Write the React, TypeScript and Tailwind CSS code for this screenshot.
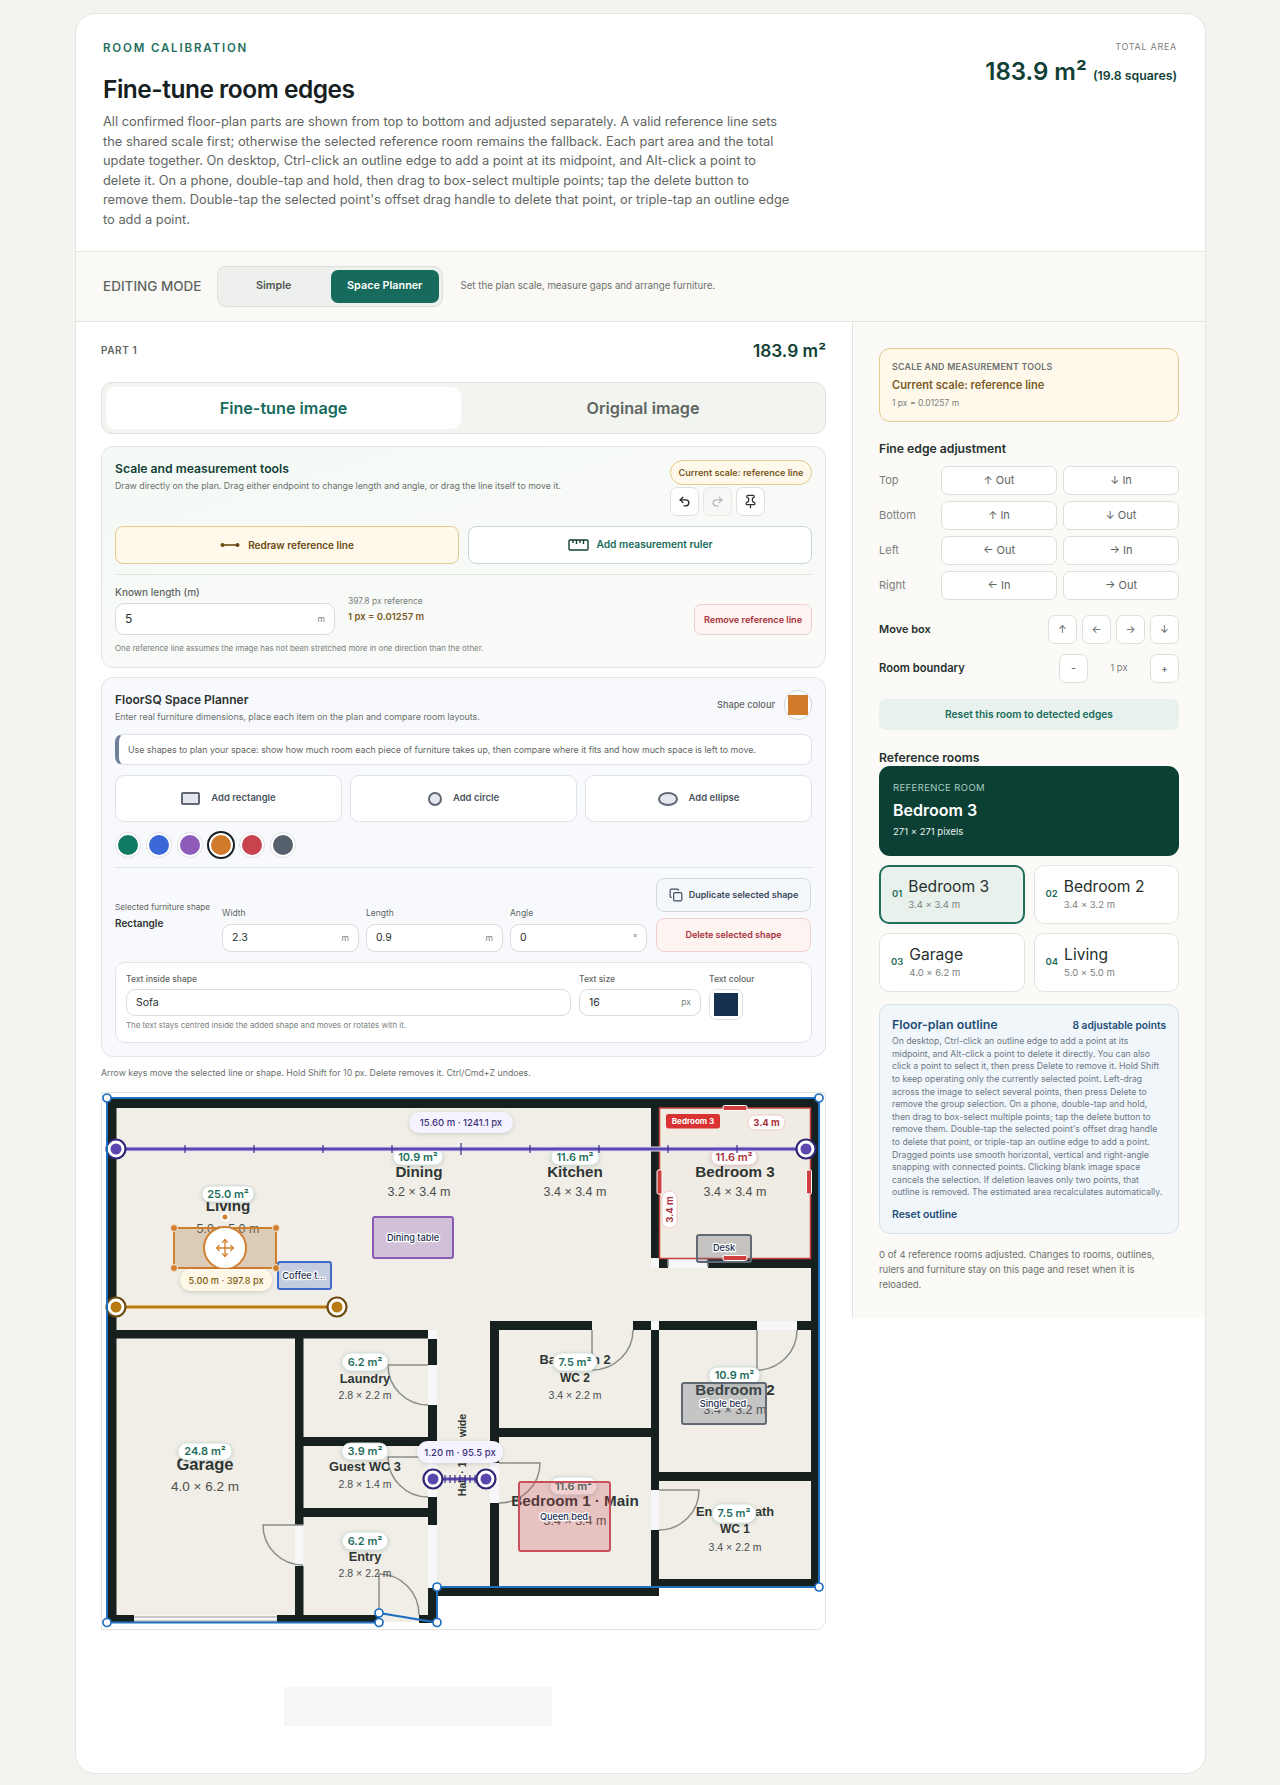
import { Copy, Move, Pin, Redo2, Undo2 } from 'lucide-react'

const walls = [
  [107, 1099, 712, 9],
  [107, 1099, 9.5, 524],
  [811, 1099, 8, 488],
  [116, 1330, 312, 8.5],
  [428, 1339, 9, 26],
  [428, 1405, 9, 41],
  [303, 1437, 125, 9],
  [428, 1497, 9, 28],
  [428, 1588, 9, 35],
  [295, 1338, 8.5, 187],
  [295, 1566, 8.5, 50],
  [303, 1508, 125, 9],
  [107, 1615, 27, 8],
  [277, 1615, 102, 8],
  [419, 1615, 18, 8],
  [438, 1587, 221, 9],
  [651, 1579, 168, 8],
  [490, 1321, 9, 142],
  [490, 1503, 9, 84],
  [490, 1321, 102, 9],
  [633, 1321, 18, 9],
  [659, 1321, 98, 9],
  [797, 1321, 14, 9],
  [651, 1330, 8, 160],
  [651, 1530, 8, 57],
  [490, 1428, 161, 9],
  [659, 1472, 152, 9],
  [651, 1108, 8, 150],
  [659, 1259, 9, 9],
  [708, 1259, 103, 9],
]

const gaps = [
  [428, 1330, 9, 9],
  [428, 1365, 9, 40],
  [428, 1446, 9, 51],
  [428, 1525, 9, 63],
  [295, 1525, 8.5, 41],
  [490, 1463, 9, 40],
  [651, 1321, 8, 9],
  [757, 1321, 40, 9],
  [651, 1490, 8, 40],
  [651, 1259, 8, 9],
  [668, 1259, 40, 9],
]

const doors = [
  'M428 1365H388A40 40 0 0 0 428 1405',
  'M428 1457H388A40 40 0 0 0 428 1497',
  'M303 1525H263A40 40 0 0 0 303 1565',
  'M379 1615V1574A40 41 0 0 1 419 1615',
  'M592 1330V1370A41 40 0 0 0 633 1330',
  'M757 1330V1370A40 40 0 0 0 797 1330',
  'M668 1267V1227A40 40 0 0 1 708 1267',
  'M499 1463H540A41 40 0 0 1 499 1503',
  'M659 1490H699A40 40 0 0 1 659 1530',
]

const introLines = [
  'All confirmed floor-plan parts are shown from top to bottom and adjusted separately. A valid reference line sets',
  'the shared scale first; otherwise the selected reference room remains the fallback. Each part area and the total',
  'update together. On desktop, Ctrl-click an outline edge to add a point at its midpoint, and Alt-click a point to',
  'delete it. On a phone, double-tap and hold, then drag to box-select multiple points; tap the delete button to',
  "remove them. Double-tap the selected point's offset drag handle to delete that point, or triple-tap an outline edge",
  'to add a point.',
]

const outlineLines = [
  'On desktop, Ctrl-click an outline edge to add a point at its',
  'midpoint, and Alt-click a point to delete it directly. You can also',
  'click a point to select it, then press Delete to remove it. Hold Shift',
  'to keep operating only the currently selected point. Left-drag',
  'across the image to select several points, then press Delete to',
  'remove the group selection. On a phone, double-tap and hold,',
  'then drag to box-select multiple points; tap the delete button to',
  "remove them. Double-tap the selected point's offset drag handle",
  'to delete that point, or triple-tap an outline edge to add a point.',
  'Dragged points use smooth horizontal, vertical and right-angle',
  'snapping with connected points. Clicking blank image space',
  'cancels the selection. If deletion leaves only two points, that',
  'outline is removed. The estimated area recalculates automatically.',
]

const planText = "font-['Liberation_Sans',Arial,sans-serif]"

function Room(props: { x: number; y: number; name: string; size?: number; sub?: string; subY?: number; dims: string; dimsY: number; dimSize?: number }) {
  const size = props.size ?? 15.2
  return (
    <g className={planText} textAnchor="middle">
      <text x={props.x} y={props.y} fontSize={size} fontWeight="700" fill="#2f3634">{props.name}</text>
      {props.sub && <text x={props.x} y={props.subY} fontSize={12} fontWeight="700" fill="#2f3634">{props.sub}</text>}
      <text x={props.x} y={props.dimsY} fontSize={props.dimSize ?? 12.5} fill="#4b4f4d">{props.dims}</text>
    </g>
  )
}

function AreaPill(props: { x1: number; x2: number; y1: number; y2: number; text: string; red?: boolean }) {
  const w = props.x2 - props.x1
  const h = props.y2 - props.y1
  return (
    <g>
      <rect x={props.x1} y={props.y1} width={w} height={h} rx={h / 2} fill="#fff" stroke={props.red ? '#efc9c9' : '#cfe2da'} strokeWidth="1" className="drop-shadow-sm" />
      <text x={props.x1 + w / 2} y={props.y1 + h / 2 + 3.8} textAnchor="middle" fontSize="11" fontWeight="600" fill={props.red ? '#a9323c' : '#1f6e5c'}>{props.text}</text>
    </g>
  )
}

function EndPoint(props: { x: number; y: number; ring: string; fill: string }) {
  return (
    <g>
      <circle cx={props.x} cy={props.y} r="9.5" fill="#fff" stroke={props.ring} strokeWidth="2.2" />
      <circle cx={props.x} cy={props.y} r="5.5" fill={props.fill} />
    </g>
  )
}

function ShapeLabel(props: { x: number; y: number; text: string; size?: number }) {
  return (
    <text x={props.x} y={props.y} textAnchor="middle" fontSize={props.size ?? 9.2} fontWeight="500" fill="#1e2f52" stroke="#fff" strokeWidth="2.5" strokeLinejoin="round" className="[paint-order:stroke]">
      {props.text}
    </text>
  )
}

function EdgeHandle(props: { x: number; y: number; w: number; h: number }) {
  return <rect x={props.x - props.w / 2} y={props.y - props.h / 2} width={props.w} height={props.h} rx="1.5" fill="#cf3f3f" stroke="#fff" strokeWidth="1" />
}

function FloorPlan() {
  const ticks = [185, 254, 323, 392, 461, 530, 599, 668, 737]
  const outline = [[107, 1098], [819, 1098], [819, 1587], [437, 1587], [437, 1622.5], [379, 1613], [379, 1622.5], [107, 1622.5]]
  return (
    <div className="h-[538px] w-[725px] overflow-hidden rounded-br-[10px] border border-[#e1e4de] bg-white">
      <svg viewBox="102 1092 724 538" width="724" height="538" className="-mt-[1px] block font-['Inter',sans-serif]">
        <path d="M107 1099H819V1587H659V1596H437V1622H107Z" fill="#f0eee7" />
        {walls.map(w => <rect key={w.join()} x={w[0]} y={w[1]} width={w[2]} height={w[3]} fill="#16211f" />)}
        {gaps.map(g => <rect key={g.join()} x={g[0]} y={g[1]} width={g[2]} height={g[3]} fill="#f7f7f9" />)}
        <rect x="134" y="1615" width="143" height="8" fill="#f7f7f9" />
        <path d="M134 1617H277M134 1621H277" stroke="#999" strokeWidth="1.2" />
        {doors.map(d => <path key={d} d={d} fill="none" stroke="#8b8f8b" strokeWidth="1.5" />)}

        <rect x="659.5" y="1108" width="151" height="150.5" fill="#f0ebe3" stroke="#c4403f" strokeWidth="1.5" />

        <Room x={419} y={1177} name="Dining" dims="3.2 × 3.4 m" dimsY={1196} />
        <Room x={575} y={1177} name="Kitchen" dims="3.4 × 3.4 m" dimsY={1196} />
        <Room x={735} y={1177} name="Bedroom 3" dims="3.4 × 3.4 m" dimsY={1196} />
        <Room x={228} y={1211} name="Living" dims="5.0 × 5.0 m" dimsY={1233} />
        <Room x={205} y={1470} name="Garage" size={16.6} dims="4.0 × 6.2 m" dimsY={1491} dimSize={13.5} />
        <Room x={365} y={1383} name="Laundry" size={12.8} dims="2.8 × 2.2 m" dimsY={1399} dimSize={10.5} />
        <Room x={365} y={1471} name="Guest WC 3" size={12.8} dims="2.8 × 1.4 m" dimsY={1488} dimSize={10.5} />
        <Room x={365} y={1561} name="Entry" size={12.8} dims="2.8 × 2.2 m" dimsY={1577} dimSize={10.5} />
        <Room x={575} y={1364} name="Bathroom 2" size={12.8} sub="WC 2" subY={1382} dims="3.4 × 2.2 m" dimsY={1399} dimSize={10.5} />
        <Room x={735} y={1395} name="Bedroom 2" dims="3.4 × 3.2 m" dimsY={1414} />
        <Room x={575} y={1506} name="Bedroom 1 · Main" dims="3.4 × 3.4 m" dimsY={1525} />
        <Room x={735} y={1516} name="Ensuite Bath" size={12.8} sub="WC 1" subY={1533} dims="3.4 × 2.2 m" dimsY={1551} dimSize={10.5} />
        <text x="466" y="1455" transform="rotate(-90 466 1455)" textAnchor="middle" fontSize="10.6" fontWeight="700" fill="#2f3634" className={planText}>Hall · 1.2 m wide</text>

        <AreaPill x1={393} x2={443} y1={1149} y2={1165} text="10.9 m²" />
        <AreaPill x1={551} x2={599} y1={1149} y2={1165} text="11.6 m²" />
        <AreaPill x1={711} x2={757} y1={1149} y2={1165} text="11.6 m²" red />
        <AreaPill x1={202} x2={254} y1={1186} y2={1202} text="25.0 m²" />
        <AreaPill x1={178} x2={232} y1={1443} y2={1460} text="24.8 m²" />
        <AreaPill x1={342} x2={388} y1={1353} y2={1371} text="6.2 m²" />
        <AreaPill x1={342} x2={388} y1={1443} y2={1460} text="3.9 m²" />
        <AreaPill x1={342} x2={388} y1={1532} y2={1550} text="6.2 m²" />
        <AreaPill x1={553} x2={597} y1={1353} y2={1371} text="7.5 m²" />
        <AreaPill x1={709} x2={760} y1={1367} y2={1384} text="10.9 m²" />
        <AreaPill x1={550} x2={597} y1={1477} y2={1495} text="11.6 m²" />
        <AreaPill x1={712} x2={756} y1={1504} y2={1523} text="7.5 m²" />

        <rect x="373" y="1217" width="80" height="41" rx="2" fill="#8a5bb5" fillOpacity="0.3" stroke="#8a5bb5" strokeWidth="2" />
        <ShapeLabel x={413} y={1241} text="Dining table" />
        <rect x="278" y="1262" width="53" height="27" rx="2" fill="#3f69c9" fillOpacity="0.25" stroke="#3f69c9" strokeWidth="2" />
        <ShapeLabel x={304} y={1279} text="Coffee t…" />
        <rect x="697" y="1235" width="54" height="27" rx="2" fill="#5f6873" fillOpacity="0.3" stroke="#5f6873" strokeWidth="2" />
        <ShapeLabel x={724} y={1251} text="Desk" />
        <rect x="682" y="1383" width="84" height="41" rx="2" fill="#5f6873" fillOpacity="0.3" stroke="#5f6873" strokeWidth="2" />
        <ShapeLabel x={723} y={1407} text="Single bed" />
        <rect x="519" y="1482" width="91" height="69" rx="2" fill="#c9434f" fillOpacity="0.25" stroke="#c9505a" strokeWidth="2" />
        <ShapeLabel x={564} y={1520} text="Queen bed" />

        <EdgeHandle x={735} y={1108} w={24} h={5} />
        <EdgeHandle x={735} y={1258} w={24} h={5} />
        <EdgeHandle x={659.5} y={1182} w={5} h={24} />
        <EdgeHandle x={809} y={1182} w={5} h={24} />
        <rect x="666" y="1114" width="54" height="14.5" rx="2.5" fill="#d93232" />
        <text x="693" y="1124" textAnchor="middle" fontSize="8" fontWeight="700" fill="#fff">Bedroom 3</text>
        <rect x="748" y="1115" width="37" height="15" rx="7.5" fill="#fff" stroke="#efc9c9" />
        <text x="766.5" y="1126" textAnchor="middle" fontSize="9.5" fontWeight="700" fill="#a9323c">3.4 m</text>
        <rect x="662" y="1191" width="15" height="37" rx="7.5" fill="#fff" stroke="#efc9c9" />
        <text x="673" y="1209.5" transform="rotate(-90 673 1209.5)" textAnchor="middle" fontSize="9.5" fontWeight="700" fill="#a9323c">3.4 m</text>

        <path d="M116 1149H806" stroke="#e4def6" strokeWidth="5" />
        <path d="M116 1149H806" stroke="#5b47ad" strokeWidth="3" />
        {ticks.map(t => <path key={t} d={t === 461 ? `M${t} 1143V1155` : `M${t} 1145V1153`} stroke="#3b2f8c" strokeWidth="1.2" />)}
        <EndPoint x={116} y={1149} ring="#2f2575" fill="#5b47ad" />
        <EndPoint x={806} y={1149} ring="#2f2575" fill="#5b47ad" />
        <rect x="409" y="1112" width="104" height="21" rx="10.5" fill="#f5f3ff" className="drop-shadow-sm" />
        <text x="461" y="1126" textAnchor="middle" fontSize="9.5" fontWeight="500" fill="#3b3278">15.60 m · 1241.1 px</text>

        <path d="M116 1307H337" stroke="#fbf1d6" strokeWidth="5" />
        <path d="M116 1307H337" stroke="#b87a13" strokeWidth="3" />
        <EndPoint x={116} y={1307} ring="#6b4a10" fill="#b87a13" />
        <EndPoint x={337} y={1307} ring="#6b4a10" fill="#b87a13" />

        <rect x="174" y="1228" width="102" height="40" fill="#b07a4a" fillOpacity="0.3" stroke="#d17f2f" strokeWidth="2" />
        {[[174, 1228], [276, 1228], [174, 1268], [276, 1268]].map(p => <circle key={p.join()} cx={p[0]} cy={p[1]} r="3.5" fill="#d17f2f" stroke="#f3e5d4" />)}
        <circle cx="225" cy="1217" r="3.5" fill="#d17f2f" stroke="#fff" strokeWidth="2" />
        <circle cx="225" cy="1248" r="21" fill="#fff" stroke="#d17f2f" strokeWidth="2" />
        <foreignObject x="215" y="1238" width="20" height="20">
          <Move size={20} color="#d17f2f" strokeWidth={1.6} />
        </foreignObject>
        <rect x="180" y="1269" width="92" height="22" rx="11" fill="#fff8e8" className="drop-shadow-sm" />
        <text x="226" y="1283.5" textAnchor="middle" fontSize="9.2" fontWeight="500" fill="#7a5a10">5.00 m · 397.8 px</text>

        <path d="M433 1479H486" stroke="#5b47ad" strokeWidth="3" />
        {[445, 450, 455, 460, 465, 470, 475].map(t => <path key={t} d={`M${t} 1475V1483`} stroke="#3b2f8c" strokeWidth="1.2" />)}
        <EndPoint x={433} y={1479} ring="#2f2575" fill="#5b47ad" />
        <EndPoint x={486} y={1479} ring="#2f2575" fill="#5b47ad" />
        <rect x="417" y="1441" width="86" height="22" rx="11" fill="#f5f3ff" className="drop-shadow-sm" />
        <text x="460" y="1455.5" textAnchor="middle" fontSize="9.5" fontWeight="500" fill="#3b3278">1.20 m · 95.5 px</text>

        <polygon points={outline.map(p => p.join(',')).join(' ')} fill="none" stroke="#1f6fc0" strokeWidth="2" />
        {outline.map(p => <circle key={p.join()} cx={p[0]} cy={p[1]} r="4" fill="#fff" stroke="#1f6fc0" strokeWidth="1.7" />)}
      </svg>
    </div>
  )
}

function Field(props: { value: string; unit: string; className: string }) {
  return (
    <div className={`flex items-center justify-between rounded-[9px] border border-[#d9ddd8] bg-white px-[9px] text-[10.5px] text-[#26302d] ${props.className}`}>
      <span>{props.value}</span>
      <span className="text-[8.5px] text-[#7a807c]">{props.unit}</span>
    </div>
  )
}

function EdgeButton(props: { label: string }) {
  return <button className="h-[29px] rounded-[7px] border border-[#dddfda] bg-white text-[11px] text-[#5c635f]">{props.label}</button>
}

function SquareButton(props: { label: string }) {
  return <button className="h-[29px] w-[29px] rounded-[7px] border border-[#dddfda] bg-white text-[10.5px] text-[#5c635f]">{props.label}</button>
}

function RoomCard(props: { num: string; name: string; size: string; active?: boolean }) {
  return (
    <div className={`flex h-[59px] items-center gap-[6px] rounded-[10px] px-[11px] ${props.active ? 'border-2 border-[#1f6e5c] bg-[#e9f1ed]' : 'border border-[#e2e3df] bg-white'}`}>
      <span className="text-[9.5px] font-semibold text-[#1f6e5c]">{props.num}</span>
      <span>
        <span className="block text-[15.6px] leading-[20px] text-[#26302d]">{props.name}</span>
        <span className="block text-[9.5px] leading-[15px] text-[#7a807c]">{props.size}</span>
      </span>
    </div>
  )
}

function Swatch(props: { color: string; active?: boolean }) {
  return (
    <span className={`flex items-center justify-center rounded-full bg-white ${props.active ? '-mx-[1px] h-[28px] w-[28px] border-2 border-[#16211f]' : 'h-[26px] w-[26px] border border-[#dfe2e8]'}`}>
      <span className={`h-[20px] w-[20px] rounded-full ${props.color}`} />
    </span>
  )
}

function AddShape(props: { label: string; icon: React.ReactNode }) {
  return (
    <button className="flex h-[47px] flex-1 items-center justify-center gap-[11px] rounded-[9px] border border-[#dfe2e8] bg-white text-[9.5px] font-semibold text-[#4c5560]">
      {props.icon}
      {props.label}
    </button>
  )
}

export default function App() {
  return (
    <div className="min-h-[1785px] bg-[#f3f4ef] px-[75px] pt-[13px] font-['Inter',sans-serif]">
      <div className="h-[1761px] w-[1131px] overflow-hidden rounded-[20px] border border-[#e4e5e0] bg-white">
        <header className="flex h-[238px] justify-between border-b border-[#e4e5e0] pt-[27px] pr-[28px] pl-[27px]">
          <div>
            <div className="text-[11.5px] leading-[14px] font-semibold tracking-[0.16em] text-[#1f6e5c]">ROOM CALIBRATION</div>
            <h1 className="mt-[19px] text-[24.5px] leading-[30px] font-semibold tracking-[-0.02em] text-[#16211f]">Fine-tune room edges</h1>
            <p className="mt-[8px] text-[12.85px] leading-[19.6px] whitespace-nowrap text-[#5f6662]">
              {introLines.map(line => <span key={line} className="block">{line}</span>)}
            </p>
          </div>
          <div className="text-right">
            <div className="text-[9px] leading-[11px] tracking-[0.08em] text-[#7a807c]">TOTAL AREA</div>
            <div className="mt-[5px] text-[#123f36]">
              <span className="text-[24px] leading-[30px] font-semibold">183.9 m²</span>
              <span className="ml-[6px] text-[12.3px] font-semibold">(19.8 squares)</span>
            </div>
          </div>
        </header>

        <div className="flex h-[70px] items-center border-b border-[#e4e5e0] bg-[#faf9f6] pl-[27px]">
          <span className="w-[113.5px] text-[13.5px] font-medium whitespace-nowrap text-[#5f6662]">EDITING MODE</span>
          <div className="flex h-[41px] w-[226px] items-center rounded-[9px] border border-[#dde0db] bg-[#edf0ec] px-[3px]">
            <button className="h-[33px] w-[111px] pr-[4px] text-[10.8px] font-semibold text-[#4f5652]">Simple</button>
            <button className="h-[33px] w-[108px] rounded-[7px] bg-[#176b5c] text-[10.8px] font-semibold text-white">Space Planner</button>
          </div>
          <span className="ml-[18px] text-[9.7px] text-[#6b716d]">Set the plan scale, measure gaps and arrange furniture.</span>
        </div>

        <div className="grid grid-cols-[776px_1fr]">
          <main className="pr-[26px] pl-[25px]">
            <div className="flex h-[60px] items-center justify-between pb-[3px]">
              <span className="text-[10px] font-semibold tracking-[0.06em] text-[#5f6662]">PART 1</span>
              <span className="text-[17.3px] font-semibold text-[#123f36]">183.9 m²</span>
            </div>
            <div className="flex h-[52px] items-center rounded-[11px] border border-[#dfe2dd] bg-[#f2f4f0] px-[4px]">
              <button className="h-[42px] w-[355px] rounded-[9px] bg-white text-[16.2px] font-semibold text-[#176b5c]">Fine-tune image</button>
              <button className="h-[42px] flex-1 pl-[4px] text-[16.2px] font-semibold text-[#5f6662]">Original image</button>
            </div>

            <section className="mt-[12px] h-[222px] rounded-[12px] border border-[#e0e5df] bg-gradient-to-br from-[#f5faf6] to-[#fafaf8] px-[13px] pt-[13px]">
              <div className="flex h-[66px] justify-between">
                <div>
                  <h2 className="text-[12.2px] leading-[18px] font-semibold text-[#123f36]">Scale and measurement tools</h2>
                  <p className="text-[8.8px] leading-[16px] text-[#6b716d]">Draw directly on the plan. Drag either endpoint to change length and angle, or drag the line itself to move it.</p>
                </div>
                <div className="w-[142px]">
                  <div className="flex h-[25px] items-center justify-center rounded-full border border-[#e3c98e] bg-[#fff9ec] text-[9.1px] font-semibold whitespace-nowrap text-[#7a5a1f]">Current scale: reference line</div>
                  <div className="mt-[2px] flex gap-[4px]">
                    <span className="flex h-[29px] w-[29px] items-center justify-center rounded-[7px] border border-[#dde0db] bg-white"><Undo2 size={13} color="#222" strokeWidth={2.4} /></span>
                    <span className="flex h-[29px] w-[29px] items-center justify-center rounded-[7px] border border-[#e6e8e4] bg-[#f7f8f6]"><Redo2 size={13} color="#b4b8b4" strokeWidth={2.4} /></span>
                    <span className="flex h-[29px] w-[29px] items-center justify-center rounded-[7px] border border-[#dde0db] bg-white"><Pin size={15} color="#333" /></span>
                  </div>
                </div>
              </div>
              <div className="flex gap-[9px]">
                <button className="flex h-[38px] flex-1 items-center justify-center gap-[8px] rounded-[8px] border border-[#e3c98e] bg-[#fff9ec] text-[10px] font-semibold text-[#6b4a10]">
                  <svg width="20" height="6" viewBox="0 0 20 6"><path d="M2 3H18" stroke="#6b4a10" strokeWidth="1.6" /><circle cx="2.5" cy="3" r="2" fill="#6b4a10" /><circle cx="17.5" cy="3" r="2" fill="#6b4a10" /></svg>
                  Redraw reference line
                </button>
                <button className="flex h-[38px] flex-1 items-center justify-center gap-[8px] rounded-[8px] border border-[#c5d8d1] bg-white text-[10.2px] font-semibold text-[#176b5c]">
                  <svg width="21" height="12" viewBox="0 0 21 12" fill="none" stroke="#123f36" strokeWidth="1.4"><rect x="1" y="1" width="19" height="10" rx="1" /><path d="M5 1V4M8.5 1V5M12 1V4M15.5 1V5" /></svg>
                  Add measurement ruler
                </button>
              </div>
              <div className="mt-[10px] border-t border-[#e0e5df]" />
              <div className="mt-[10px] flex h-[50px] items-end">
                <div className="w-[220px]">
                  <div className="text-[10px] leading-[12px] font-medium text-[#5f6662]">Known length (m)</div>
                  <Field value="5" unit="m" className="mt-[5px] h-[32px] !text-[12px]" />
                </div>
                <div className="ml-[13px] self-start pt-[10px]">
                  <div className="text-[8.5px] leading-[12px] text-[#7a807c]">397.8 px reference</div>
                  <div className="mt-[4px] text-[9.5px] leading-[12px] font-semibold text-[#7a5a1f]">1 px = 0.01257 m</div>
                </div>
                <button className="ml-auto h-[31px] w-[118px] rounded-[7px] border border-[#f0cfcf] bg-[#fdf3f1] text-[9.1px] font-semibold text-[#a9323c]">Remove reference line</button>
              </div>
              <p className="mt-[7px] text-[7.9px] leading-[12px] text-[#7a807c]">One reference line assumes the image has not been stretched more in one direction than the other.</p>
            </section>

            <section className="mt-[9px] h-[380px] rounded-[12px] border border-[#e0e4ea] bg-[#f8f9fc] px-[13px] pt-[13px]">
              <div className="flex justify-between">
                <div>
                  <h2 className="text-[12px] leading-[18px] font-semibold text-[#2b3230]">FloorSQ Space Planner</h2>
                  <p className="text-[8.85px] leading-[16px] text-[#6b716d]">Enter real furniture dimensions, place each item on the plan and compare room layouts.</p>
                </div>
                <div className="-mt-[1px] flex h-[30px] items-center gap-[9px]">
                  <span className="text-[9.2px] font-medium text-[#5f6662]">Shape colour</span>
                  <span className="flex h-[30px] w-[28px] items-center justify-center rounded-full border border-[#cfd4dc] bg-white"><span className="h-[20px] w-[20px] bg-[#d07a2c]" /></span>
                </div>
              </div>
              <div className="mt-[9px] flex h-[31px] items-center rounded-[8px] border border-[#dfe2e8] border-l-[4px] border-l-[#6f8199] bg-white pl-[9px] text-[8.8px] text-[#5f6662]">
                Use shapes to plan your space: show how much room each piece of furniture takes up, then compare where it fits and how much space is left to move.
              </div>
              <div className="mt-[10px] flex gap-[8px]">
                <AddShape label="Add rectangle" icon={<span className="h-[13px] w-[19px] rounded-[2px] border-2 border-[#5f6873] bg-[#e4e7ee]" />} />
                <AddShape label="Add circle" icon={<span className="h-[14px] w-[14px] rounded-full border-2 border-[#5f6873] bg-[#e4e7ee]" />} />
                <AddShape label="Add ellipse" icon={<span className="h-[14px] w-[20px] rounded-[50%] border-2 border-[#5f6873] bg-[#e4e7ee]" />} />
              </div>
              <div className="mt-[9px] flex items-center gap-[5px]">
                <Swatch color="bg-[#107a63]" />
                <Swatch color="bg-[#3a68d6]" />
                <Swatch color="bg-[#8f5bba]" />
                <Swatch color="bg-[#d07a2c]" active />
                <Swatch color="bg-[#c9434f]" />
                <Swatch color="bg-[#56606c]" />
              </div>
              <div className="mt-[8px] border-t border-[#e0e4ea]" />
              <div className="mt-[10px] flex h-[74px] items-end">
                <div className="w-[107px] self-center">
                  <div className="text-[8.2px] leading-[12px] text-[#5f6662]">Selected furniture shape</div>
                  <div className="mt-[3px] text-[10px] leading-[14px] font-semibold text-[#2b3230]">Rectangle</div>
                </div>
                <div className="flex gap-[7px]">
                  <div>
                    <div className="mb-[5px] text-[8.5px] leading-[11px] text-[#5f6662]">Width</div>
                    <Field value="2.3" unit="m" className="h-[28px] w-[137px]" />
                  </div>
                  <div>
                    <div className="mb-[5px] text-[8.5px] leading-[11px] text-[#5f6662]">Length</div>
                    <Field value="0.9" unit="m" className="h-[28px] w-[137px]" />
                  </div>
                  <div>
                    <div className="mb-[5px] text-[8.5px] leading-[11px] text-[#5f6662]">Angle</div>
                    <Field value="0" unit="°" className="h-[28px] w-[137px]" />
                  </div>
                </div>
                <div className="ml-[9px] flex w-[155px] flex-col gap-[6px]">
                  <button className="flex h-[34px] items-center justify-center gap-[6px] rounded-[8px] border border-[#cdd9e4] bg-[#f4f8fb] text-[9px] font-semibold text-[#3b4a5c]"><Copy size={14} />Duplicate selected shape</button>
                  <button className="h-[34px] rounded-[8px] border border-[#f0cfcf] bg-[#fdf3f1] text-[9px] font-semibold text-[#a9323c]">Delete selected shape</button>
                </div>
              </div>
              <div className="mt-[10px] h-[81px] rounded-[10px] border border-[#e0e4ea] bg-white pt-[11px] pr-[11px] pl-[10px]">
                <div className="flex gap-[8px]">
                  <div className="flex-1">
                    <div className="mb-[4px] text-[8.5px] leading-[11px] font-medium text-[#5f6662]">Text inside shape</div>
                    <Field value="Sofa" unit="" className="h-[27px]" />
                  </div>
                  <div className="w-[122px]">
                    <div className="mb-[4px] text-[8.5px] leading-[11px] font-medium text-[#5f6662]">Text size</div>
                    <Field value="16" unit="px" className="h-[27px]" />
                  </div>
                  <div className="w-[91px]">
                    <div className="mb-[4px] text-[8.5px] leading-[11px] font-medium whitespace-nowrap text-[#5f6662]">Text colour</div>
                    <span className="flex h-[31px] w-[34px] items-center justify-center rounded-[7px] border border-[#dfe2e8] bg-white"><span className="h-[23px] w-[24px] bg-[#16304f]" /></span>
                  </div>
                </div>
                <p className="text-[7.9px] leading-[11px] text-[#7a807c]">The text stays centred inside the added shape and moves or rotates with it.</p>
              </div>
            </section>

            <p className="mt-[10px] text-[8.75px] leading-[12px] text-[#6b716d]">Arrow keys move the selected line or shape. Hold Shift for 10 px. Delete removes it. Ctrl/Cmd+Z undoes.</p>
            <div className="mt-[13px]">
              <FloorPlan />
            </div>
            <div className="mt-[57px] ml-[183px] h-[39px] w-[268px] bg-[#f4f7f6]" />
          </main>

          <aside className="h-[996px] border-l border-[#e4e5e0] bg-[#fbfaf7] px-[26px] pt-[26px]">
            <div className="h-[74px] rounded-[11px] border border-[#e3c98e] bg-[#fff9ec] px-[12px] pt-[12px]">
              <div className="text-[8.8px] leading-[12px] font-semibold tracking-[0.03em] text-[#6b716d]">SCALE AND MEASUREMENT TOOLS</div>
              <div className="mt-[5px] text-[11.1px] leading-[15px] font-semibold text-[#7a5a1f]">Current scale: reference line</div>
              <div className="mt-[4px] text-[8.5px] leading-[12px] text-[#7a807c]">1 px = 0.01257 m</div>
            </div>
            <h3 className="mt-[19px] text-[12.2px] leading-[16px] font-semibold text-[#26302d]">Fine edge adjustment</h3>
            <div className="mt-[9px] grid grid-cols-[56px_1fr_1fr] items-center gap-[6px]">
              <span className="text-[11px] text-[#7a807c]">Top</span>
              <EdgeButton label="↑ Out" />
              <EdgeButton label="↓ In" />
              <span className="text-[11px] text-[#7a807c]">Bottom</span>
              <EdgeButton label="↑ In" />
              <EdgeButton label="↓ Out" />
              <span className="text-[11px] text-[#7a807c]">Left</span>
              <EdgeButton label="← Out" />
              <EdgeButton label="→ In" />
              <span className="text-[11px] text-[#7a807c]">Right</span>
              <EdgeButton label="← In" />
              <EdgeButton label="→ Out" />
            </div>
            <div className="mt-[15px] flex items-center justify-between">
              <span className="text-[11px] font-semibold text-[#26302d]">Move box</span>
              <div className="flex gap-[5px]">
                <SquareButton label="↑" />
                <SquareButton label="←" />
                <SquareButton label="→" />
                <SquareButton label="↓" />
              </div>
            </div>
            <div className="mt-[10px] flex items-center justify-between">
              <span className="text-[11.2px] font-semibold text-[#26302d]">Room boundary</span>
              <div className="flex items-center">
                <SquareButton label="-" />
                <span className="w-[62px] text-center text-[9.5px] text-[#7a807c]">1 px</span>
                <SquareButton label="+" />
              </div>
            </div>
            <button className="mt-[16px] h-[31px] w-full rounded-[7px] bg-[#e8f1ed] text-[10.2px] font-semibold text-[#176b5c]">Reset this room to detected edges</button>
            <h3 className="mt-[20px] text-[12.2px] leading-[16px] font-semibold text-[#26302d]">Reference rooms</h3>
            <div className="h-[90px] rounded-[11px] bg-[#0d4035] px-[14px] pt-[15px]">
              <div className="text-[9.5px] leading-[14px] tracking-[0.04em] text-[#a6cdc0]">REFERENCE ROOM</div>
              <div className="mt-[3px] text-[16px] leading-[24px] font-semibold text-white">Bedroom 3</div>
              <div className="mt-[2px] text-[9.5px] leading-[16px] text-[#e8f1ed]">271 × 271 pixels</div>
            </div>
            <div className="mt-[9px] grid grid-cols-2 gap-[9px]">
              <RoomCard num="01" name="Bedroom 3" size="3.4 × 3.4 m" active />
              <RoomCard num="02" name="Bedroom 2" size="3.4 × 3.2 m" />
              <RoomCard num="03" name="Garage" size="4.0 × 6.2 m" />
              <RoomCard num="04" name="Living" size="5.0 × 5.0 m" />
            </div>
            <div className="mt-[12px] h-[230px] rounded-[11px] border border-[#d5e0ea] bg-[#f1f6fb] px-[12px] pt-[12px]">
              <div className="flex items-baseline justify-between">
                <span className="text-[12.4px] leading-[16px] font-semibold text-[#1f4e78]">Floor-plan outline</span>
                <span className="text-[10.2px] font-semibold text-[#1f4e78]">8 adjustable points</span>
              </div>
              <p className="mt-[2px] text-[8.7px] leading-[12.6px] whitespace-nowrap text-[#6d7885]">
                {outlineLines.map(line => <span key={line} className="block">{line}</span>)}
              </p>
              <div className="mt-[8px] text-[10.4px] font-semibold text-[#1f4e78]">Reset outline</div>
            </div>
            <p className="mt-[13px] text-[9.5px] leading-[15px] text-[#6b716d]">
              0 of 4 reference rooms adjusted. Changes to rooms, outlines,<br />
              rulers and furniture stay on this page and reset when it is<br />
              reloaded.
            </p>
          </aside>
        </div>
      </div>
    </div>
  )
}
